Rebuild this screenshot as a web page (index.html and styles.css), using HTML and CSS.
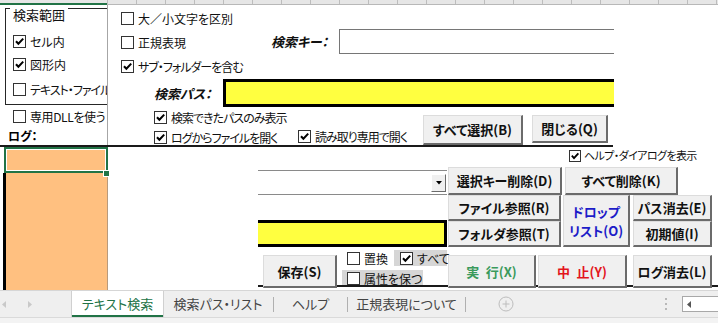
FILE: index.html
```html
<!DOCTYPE html>
<html lang="ja">
<head>
<meta charset="utf-8">
<title>テキスト検索</title>
<link rel="stylesheet" href="styles.css">
</head>
<body>
<div class="app">
  <div class="colhdr"><div class="colhdr-a"></div></div>

  <div class="sheet">
    <div class="col-line"></div>
    <div class="h-line"></div>
    <div class="h-line2"></div>

    <div class="group">
      <div class="group-frame"></div>
      <span class="legend">検索範囲</span>
      <label class="cb g1"><span class="box"><svg viewBox="0 0 11 11"><path d="M2 5.2 L4.4 7.8 L9.2 2.6"/></svg></span>セル内</label>
      <label class="cb g2"><span class="box"><svg viewBox="0 0 11 11"><path d="M2 5.2 L4.4 7.8 L9.2 2.6"/></svg></span>図形内</label>
      <label class="cb g3 tight"><span class="box"></span>テキスト・ファイル</label>
    </div>

    <label class="cb c-dll"><span class="box"></span>専用DLLを使う</label>
    <div class="log-label">ログ：</div>

    <div class="cell-active"></div>
    <div class="cell-col"></div>
    <div class="fill-handle"></div>

    <label class="cb c-case"><span class="box"></span>大／小文字を区別</label>
    <label class="cb c-regex"><span class="box"></span>正規表現</label>
    <label class="cb c-sub tight"><span class="box"><svg viewBox="0 0 11 11"><path d="M2 5.2 L4.4 7.8 L9.2 2.6"/></svg></span>サブ・フォルダーを含む</label>

    <div class="field-label l-key">検索キー：</div>
    <div class="keybox"></div>
    <div class="field-label l-path">検索パス：</div>
    <div class="yellow y-path"></div>

    <label class="cb c-found tight"><span class="box"><svg viewBox="0 0 11 11"><path d="M2 5.2 L4.4 7.8 L9.2 2.6"/></svg></span>検索できたパスのみ表示</label>
    <label class="cb c-logopen tight"><span class="box"><svg viewBox="0 0 11 11"><path d="M2 5.2 L4.4 7.8 L9.2 2.6"/></svg></span>ログからファイルを開く</label>
    <label class="cb c-ro tight"><span class="box"><svg viewBox="0 0 11 11"><path d="M2 5.2 L4.4 7.8 L9.2 2.6"/></svg></span>読み取り専用で開く</label>

    <div class="btn b-selall">すべて選択(B)</div>
    <div class="btn b-close">閉じる(Q)</div>

    <label class="cb small c-help"><span class="box"><svg viewBox="0 0 11 11"><path d="M2 5.2 L4.4 7.8 L9.2 2.6"/></svg></span>ヘルプ・ダイアログを表示</label>

    <div class="combo"><span class="combo-btn"><svg viewBox="0 0 6 4"><path d="M0 0 H6 L3 3.5 Z"/></svg></span></div>
    <div class="btn b-delkey">選択キー削除(D)</div>
    <div class="btn b-delall">すべて削除(K)</div>

    <div class="btn b-file">ファイル参照(R)</div>
    <div class="btn b-folder">フォルダ参照(T)</div>
    <div class="btn b-drop">ドロップ<br>リスト(O)</div>
    <div class="btn b-clrpath">パス消去(E)</div>
    <div class="btn b-init">初期値(I)</div>

    <div class="yellow y-replace"></div>

    <label class="cb c-replace"><span class="box"></span>置換</label>
    <div class="graybg gb-all"><label class="cb c-all"><span class="box"><svg viewBox="0 0 11 11"><path d="M2 5.2 L4.4 7.8 L9.2 2.6"/></svg></span>すべて</label></div>
    <div class="graybg gb-attr"><label class="cb c-attr"><span class="box"></span>属性を保つ</label></div>

    <div class="btn b-save">保存(S)</div>
    <div class="btn b-run">実&ensp;行(X)</div>
    <div class="btn b-stop">中&ensp;止(Y)</div>
    <div class="btn b-clrlog">ログ消去(L)</div>
  </div>

  <div class="tabbar">
    <div class="tabrow">
      <div class="tab-nav">
        <svg class="nav-arrow" viewBox="0 0 4 7"><path d="M4 0 V7 L0 3.5 Z"/></svg>
        <svg class="nav-arrow" viewBox="0 0 4 7"><path d="M0 0 V7 L4 3.5 Z"/></svg>
      </div>
      <div class="tab active t1">テキスト検索</div>
      <div class="tab t2">検索パス・リスト</div>
      <span class="tab-sep"></span>
      <div class="tab t3">ヘルプ</div>
      <span class="tab-sep"></span>
      <div class="tab t4">正規表現について</div>
      <span class="tab-sep"></span>
      <div class="tab-add"><svg viewBox="0 0 16 16"><circle cx="8" cy="8" r="7"/><path d="M8 4.5 V11.5 M4.5 8 H11.5"/></svg></div>
      <div class="tab-spacer"></div>
      <div class="tab-dots"><svg viewBox="0 0 2 12"><rect x="0" y="0" width="2" height="2"/><rect x="0" y="5" width="2" height="2"/><rect x="0" y="10" width="2" height="2"/></svg></div>
      <div class="hscroll"><svg viewBox="0 0 4 7"><path d="M4 0 V7 L0 3.5 Z"/></svg></div>
    </div>
  </div>
</div>
</body>
</html>
```

FILE: styles.css
```css
html, body {
  margin: 0;
  padding: 0;
  background: #fff;
}

.app {
  width: 718px;
  height: 323px;
  overflow: hidden;
  display: flex;
  flex-direction: column;
  font-family: "Noto Sans CJK JP", "Noto Sans", sans-serif;
  font-feature-settings: "palt";
  color: #000;
}

/* column header strip */
.colhdr {
  flex: none;
  height: 5px;
  box-sizing: border-box;
  border-bottom: 1px solid #b8b8b8;
  background-color: #e6e6e6;
  background-image: repeating-linear-gradient(to right, #bdbdbd 0, #bdbdbd 1px, transparent 1px, transparent 29px);
  background-position: 107px 0;
  background-repeat: repeat-x;
}
.colhdr-a {
  width: 107px;
  height: 5px;
  box-sizing: border-box;
  border-bottom: 2px solid #217346;
  background: #e6e6e6;
}

/* sheet canvas with floating form controls */
.sheet {
  flex: none;
  position: relative;
  height: 285px;
  overflow: hidden;
}

.col-line {
  position: absolute;
  left: 107px;
  top: 0;
  width: 1px;
  height: 141px;
  background: #a6a6a6;
}
.h-line {
  position: absolute;
  left: 0;
  top: 140px;
  width: 613px;
  height: 2px;
  background: #1a1a1a;
}
.h-line2 {
  position: absolute;
  left: 258px;
  top: 280px;
  width: 460px;
  height: 2px;
  background: #1a1a1a;
}

/* group box */
.group {
  position: absolute;
  left: 5px;
  top: 3px;
  width: 102px;
  height: 97px;
  clip-path: inset(-6px 0 -6px -6px);
}
.group-frame {
  position: absolute;
  left: 0;
  top: 0;
  width: 110px;
  height: 97px;
  box-sizing: border-box;
  border: 1px solid #262626;
}
.legend {
  position: absolute;
  left: 5px;
  top: -1px;
  padding: 0 3px;
  background: #fff;
  font-size: 13px;
  line-height: 15px;
  color: #111;
}

/* checkbox */
.cb {
  position: absolute;
  display: flex;
  align-items: center;
  gap: 4px;
  height: 13px;
  font-size: 12px;
  line-height: 13px;
  white-space: nowrap;
  color: #111;
}
.cb.tight {
  letter-spacing: -1px;
}
.cb .box {
  flex: none;
  width: 13px;
  height: 13px;
  box-sizing: border-box;
  border: 1px solid #333;
  background: #fff;
  display: flex;
  align-items: center;
  justify-content: center;
}
.cb .box svg {
  width: 11px;
  height: 11px;
}
.cb .box path {
  fill: none;
  stroke: #000;
  stroke-width: 2;
}
.cb.small {
  font-size: 11px;
  gap: 3px;
  letter-spacing: -0.6px;
}
.cb.small .box {
  width: 12px;
  height: 12px;
}
.cb.small .box svg {
  width: 10px;
  height: 10px;
}

.g1 { left: 8px; top: 27px; }
.g2 { left: 8px; top: 50px; }
.g3 { left: 8px; top: 75px; letter-spacing: -1.3px; }
.c-dll { left: 13px; top: 105px; letter-spacing: -0.4px; }
.c-case { left: 121px; top: 7px; }
.c-regex { left: 121px; top: 31px; }
.c-sub { left: 121px; top: 55px; }
.c-found { left: 154px; top: 106px; }
.c-logopen { left: 154px; top: 126px; }
.c-ro { left: 298px; top: 125px; }
.c-help { left: 569px; top: 144px; }
.c-replace { left: 347px; top: 247px; }

.graybg {
  position: absolute;
  background: #d6d6d6;
}
.gb-all { left: 394px; top: 245px; width: 53px; height: 16px; }
.gb-attr { left: 342px; top: 265px; width: 81px; height: 15px; }
.c-all { left: 6px; top: 2px; }
.c-attr { left: 5px; top: 2px; }

.log-label {
  position: absolute;
  left: 8px;
  top: 124px;
  font-size: 12px;
  line-height: 14px;
  font-weight: 700;
}

/* cells */
.cell-active {
  position: absolute;
  left: 4px;
  top: 142px;
  width: 104px;
  height: 26px;
  box-sizing: border-box;
  border: 2px solid #217346;
  background: #ffc080;
  box-shadow: inset 0 0 0 1px #fff;
}
.cell-col {
  position: absolute;
  left: 3px;
  top: 168px;
  width: 105px;
  height: 117px;
  box-sizing: border-box;
  border-left: 3px solid #000;
  border-right: 1px solid #b89a7c;
  background: #ffc080;
}
.fill-handle {
  position: absolute;
  left: 103px;
  top: 165px;
  width: 5px;
  height: 5px;
  background: #217346;
  border: 1px solid #fff;
}

/* labels and fields */
.field-label {
  position: absolute;
  font-size: 13px;
  line-height: 14px;
  font-weight: 700;
  font-style: italic;
  white-space: nowrap;
  color: #111;
}
.l-key { left: 271px; top: 30px; }
.l-path { left: 154px; top: 82px; }

.keybox {
  position: absolute;
  left: 339px;
  top: 24px;
  width: 275px;
  height: 25px;
  box-sizing: border-box;
  border: 1px solid #767676;
  border-right: none;
  background: #fff;
}
.yellow {
  position: absolute;
  box-sizing: border-box;
  background: #ffff40;
  border: 3px solid #000;
}
.y-path {
  left: 223px;
  top: 74px;
  width: 391px;
  height: 28px;
  border-right: none;
}
.y-replace {
  left: 258px;
  top: 215px;
  width: 189px;
  height: 27px;
  border-left: none;
}

.combo {
  position: absolute;
  left: 258px;
  top: 165px;
  width: 189px;
  height: 25px;
  box-sizing: border-box;
  border-top: 1px solid #8a8a8a;
  border-bottom: 1px solid #8a8a8a;
  background: #fff;
}
.combo-btn {
  position: absolute;
  right: 1px;
  top: 3px;
  width: 15px;
  height: 18px;
  box-sizing: border-box;
  background: #f0f0f0;
  border-style: solid;
  border-width: 1px;
  border-color: #fff #6b6b6b #6b6b6b #fff;
  display: flex;
  align-items: center;
  justify-content: center;
}
.combo-btn svg {
  width: 6px;
  height: 4px;
}
.combo-btn path { fill: #000; }

/* buttons */
.btn {
  position: absolute;
  display: flex;
  align-items: center;
  justify-content: center;
  text-align: center;
  box-sizing: border-box;
  background: #f0f0f0;
  border-style: solid;
  border-width: 1px 2px 2px 1px;
  border-color: #dcdcdc #6b6b6b #6b6b6b #dcdcdc;
  font-size: 13px;
  line-height: 19px;
  font-weight: 700;
  white-space: nowrap;
  color: #111;
}
.b-selall { left: 423px; top: 110px; width: 100px; height: 30px; }
.b-close { left: 532px; top: 110px; width: 76px; height: 28px; }
.b-delkey { left: 448px; top: 162px; width: 114px; height: 28px; }
.b-delall { left: 565px; top: 162px; width: 113px; height: 28px; }
.b-file { left: 448px; top: 190px; width: 113px; height: 26px; }
.b-folder { left: 448px; top: 216px; width: 113px; height: 26px; }
.b-drop { left: 563px; top: 190px; width: 67px; height: 52px; color: #1c1cc8; }
.b-clrpath { left: 633px; top: 190px; width: 79px; height: 26px; }
.b-init { left: 633px; top: 216px; width: 79px; height: 26px; }
.b-save { left: 263px; top: 250px; width: 74px; height: 33px; }
.b-run { left: 448px; top: 250px; width: 88px; height: 33px; color: #3a9a5c; }
.b-stop { left: 538px; top: 250px; width: 89px; height: 33px; color: #e3141c; }
.b-clrlog { left: 633px; top: 250px; width: 79px; height: 33px; }

/* sheet tab bar */
.tabbar {
  flex: none;
  height: 33px;
  box-sizing: border-box;
  border-top: 1px solid #d6d6d6;
  background: #f3f3f3;
}
.tabrow {
  display: flex;
  align-items: center;
  height: 27px;
  box-sizing: border-box;
  border-bottom: 1px solid #dadada;
  background: #efefef;
}
.tab-nav {
  flex: none;
  width: 72px;
  height: 26px;
  display: flex;
  align-items: center;
  gap: 22px;
  padding-left: 2px;
  box-sizing: border-box;
}
.nav-arrow {
  width: 4px;
  height: 7px;
}
.nav-arrow path { fill: #c9c9c9; }
.tab {
  flex: none;
  height: 26px;
  line-height: 25px;
  box-sizing: border-box;
  text-align: center;
  font-size: 13px;
  color: #444;
  white-space: nowrap;
  align-self: flex-start;
}
.tab.active {
  background: #fff;
  color: #217346;
  border-bottom: 2px solid #217346;
  box-shadow: -1px 0 0 #d0d0d0, 1px 0 0 #d0d0d0;
}
.t1 { width: 91px; }
.t2 { width: 110px; }
.t3 { width: 73px; }
.t4 { width: 117px; }
.tab-sep {
  flex: none;
  width: 1px;
  height: 15px;
  background: #b0b0b0;
}
.tab-add {
  flex: none;
  margin-left: 32px;
  width: 16px;
  height: 16px;
  display: flex;
}
.tab-add svg {
  width: 16px;
  height: 16px;
}
.tab-add circle, .tab-add path {
  fill: none;
  stroke: #bdbdbd;
  stroke-width: 1;
}
.tab-spacer { flex: 1; }
.tab-dots {
  flex: none;
  width: 2px;
  height: 12px;
  margin-right: 15px;
  display: flex;
}
.tab-dots svg { width: 2px; height: 12px; }
.tab-dots rect { fill: #b8b8b8; }
.hscroll {
  flex: none;
  width: 36px;
  height: 16px;
  box-sizing: border-box;
  border: 1px solid #a8a8a8;
  border-right: none;
  background: #fff;
  display: flex;
  align-items: center;
  padding-left: 4px;
}
.hscroll svg { width: 4px; height: 7px; }
.hscroll path { fill: #555; }
```
